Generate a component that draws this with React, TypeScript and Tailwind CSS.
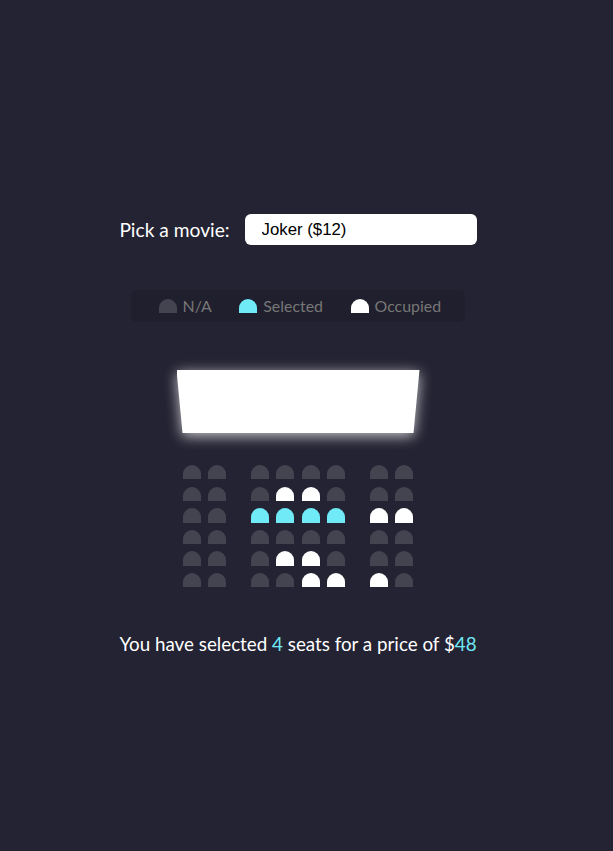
import React from "react";

type SeatState = "na" | "selected" | "occupied";

const rows: SeatState[][] = (() => {
  const base = (): SeatState[] => Array(8).fill("na");
  const r = [base(), base(), base(), base(), base(), base()];
  r[1][3] = "occupied";
  r[1][4] = "occupied";
  [2, 3, 4, 5].forEach((i) => (r[2][i] = "selected"));
  r[2][6] = "occupied";
  r[2][7] = "occupied";
  r[4][3] = "occupied";
  r[4][4] = "occupied";
  r[5][4] = "occupied";
  r[5][5] = "occupied";
  r[5][6] = "occupied";
  return r;
})();

function Seat({ state, className = "" }: { state: SeatState; className?: string }) {
  const color =
    state === "selected" ? "bg-[#6feaf6]" : state === "occupied" ? "bg-white" : "bg-[#444451]";
  return <div className={`w-[18px] h-[14.4px] rounded-t-[12px] shrink-0 ${color} ${className}`} />;
}

export default function App() {
  return (
    <div className="min-h-[851px] w-full bg-[#242333] text-white font-['Lato',sans-serif]">
      <div className="w-[596px] flex flex-col items-center pt-[214px]">
        {/* movie picker */}
        <div className="flex items-center h-[31px]">
          <label className="text-[19.2px] leading-none">Pick a movie:</label>
          <select
            defaultValue="12"
            className="ml-[15px] w-[232px] h-[31px] bg-white text-black rounded-[6px] px-[17px] text-[16.8px] font-['Liberation_Sans',Arial,sans-serif] appearance-none border-0 outline-none"
          >
            <option value="12">Joker ($12)</option>
          </select>
        </div>

        {/* legend */}
        <ul className="mt-[45px] flex h-[32px] items-center rounded-[6px] bg-[rgba(0,0,0,0.1)] px-[12px] text-[#777777]">
          <li className="mx-[12px] flex items-center">
            <Seat state="na" className="mx-[3.6px]" />
            <small className="ml-[2.4px] text-[15.9px]">N/A</small>
          </li>
          <li className="mx-[12px] flex items-center">
            <Seat state="selected" className="mx-[3.6px]" />
            <small className="ml-[2.4px] text-[15.9px]">Selected</small>
          </li>
          <li className="mx-[12px] flex items-center">
            <Seat state="occupied" className="mx-[3.6px]" />
            <small className="ml-[2.4px] text-[15.9px]">Occupied</small>
          </li>
        </ul>

        {/* screen */}
        <div className="mt-[48px] [filter:drop-shadow(0_3px_7px_rgba(255,255,255,0.75))]">
          <div className="h-[63px] w-[243px] bg-white [clip-path:polygon(0_0,100%_0,calc(100%-6px)_100%,6px_100%)]" />
        </div>

        {/* seats */}
        <div className="mt-[32px] flex flex-col gap-y-[7.2px]">
          {rows.map((row, ri) => (
            <div key={ri} className="flex">
              {row.map((s, si) => (
                <Seat
                  key={si}
                  state={s}
                  className={
                    si === 0
                      ? ""
                      : si === 2 || si === 6
                      ? "ml-[25.2px]"
                      : "ml-[7.2px]"
                  }
                />
              ))}
            </div>
          ))}
        </div>

        {/* summary */}
        <p className="mt-[46px] text-[18.8px] leading-[1.2]">
          You have selected <span className="text-[#6feaf6]">4</span> seats for a price of $
          <span className="text-[#6feaf6]">48</span>
        </p>
      </div>
    </div>
  );
}
